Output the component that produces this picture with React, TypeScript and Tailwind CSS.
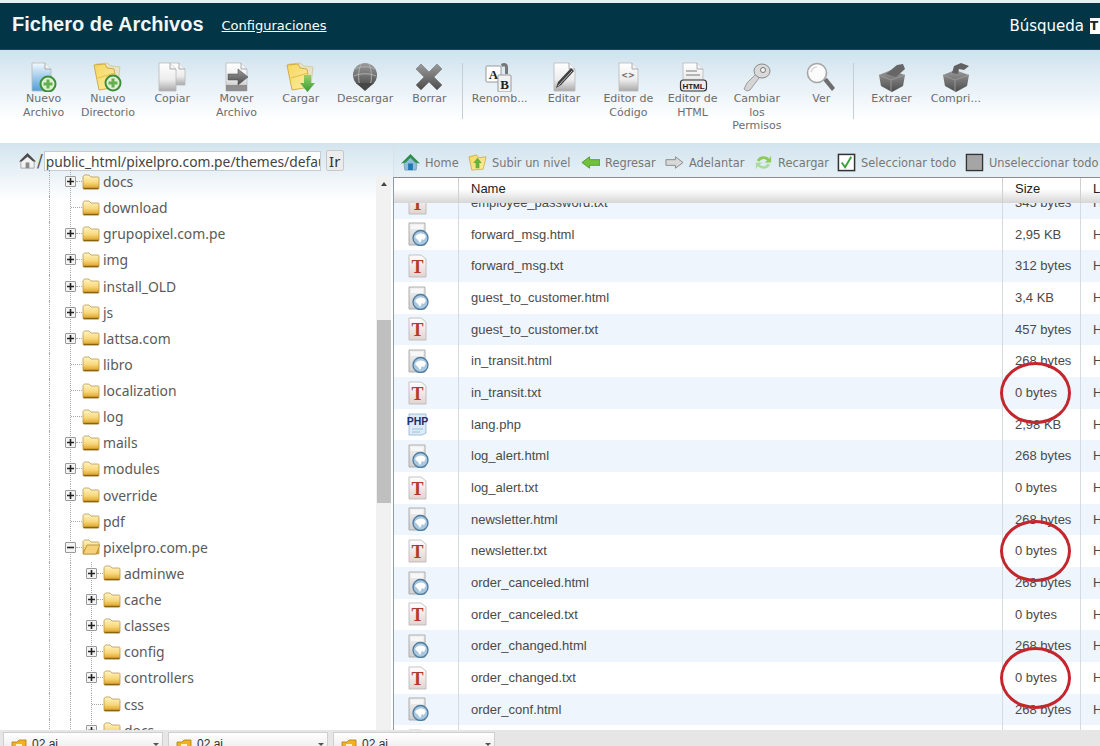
import React from "react";

const dejavu = "[font-family:'DejaVu_Sans',sans-serif]";
const noto = "[font-family:'Noto_Sans',sans-serif]";
const arial = "[font-family:'Liberation_Sans',Arial,sans-serif]";

const Defs = () => (
  <svg width={0} height={0} className="block h-0 w-0">
    <defs>
      <linearGradient id="folder" x1="0" y1="0" x2="0" y2="1">
        <stop offset="0" stopColor="#fff6c8" />
        <stop offset="0.55" stopColor="#f8d778" />
        <stop offset="1" stopColor="#d99a22" />
      </linearGradient>
      <linearGradient id="bigFolder" x1="0" y1="0" x2="1" y2="1">
        <stop offset="0" stopColor="#f7d65e" />
        <stop offset="1" stopColor="#fbeea6" />
      </linearGradient>
      <linearGradient id="page" x1="0" y1="0" x2="0" y2="1">
        <stop offset="0" stopColor="#ffffff" />
        <stop offset="0.6" stopColor="#ececec" />
        <stop offset="1" stopColor="#a9a9a9" />
      </linearGradient>
      <linearGradient id="bluePage" x1="0" y1="0" x2="0" y2="1">
        <stop offset="0" stopColor="#f4f9fd" />
        <stop offset="1" stopColor="#4f9ddb" />
      </linearGradient>
      <linearGradient id="metal" x1="0" y1="0" x2="0" y2="1">
        <stop offset="0" stopColor="#9a9a9a" />
        <stop offset="1" stopColor="#4c4c4c" />
      </linearGradient>
      <linearGradient id="green" x1="0" y1="0" x2="0" y2="1">
        <stop offset="0" stopColor="#8fd36a" />
        <stop offset="1" stopColor="#3c9a32" />
      </linearGradient>
      <linearGradient id="txtPage" x1="0" y1="0" x2="0" y2="1">
        <stop offset="0" stopColor="#ffffff" />
        <stop offset="1" stopColor="#e2d3d0" />
      </linearGradient>
      <linearGradient id="htmlPage" x1="0" y1="0" x2="0" y2="1">
        <stop offset="0" stopColor="#f2f2f2" />
        <stop offset="1" stopColor="#cfcfcf" />
      </linearGradient>
    </defs>
  </svg>
);

const Plus = ({ cx, cy }: { cx: number; cy: number }) => (
  <g>
    <circle cx={cx} cy={cy} r="7.5" fill="#dff0d5" stroke="#3d8f3a" strokeWidth="2" />
    <path d={`M${cx - 4.5} ${cy}H${cx + 4.5}M${cx} ${cy - 4.5}V${cy + 4.5}`} stroke="#62b04f" strokeWidth="3" />
  </g>
);

const Page = ({ x = 6, w = 20, h = 28, fill = "url(#page)" }: { x?: number; w?: number; h?: number; fill?: string }) => (
  <g>
    <path d={`M${x} 1H${x + w - 6}L${x + w} 7V${h}H${x}Z`} fill={fill} stroke="#b9b9b9" strokeWidth="0.8" />
    <path d={`M${x + w - 6} 1V7H${x + w}`} fill="#f4f4f4" stroke="#9b9b9b" strokeWidth="0.8" />
  </g>
);

const BigFolder = () => (
  <g>
    <path d="M4 2L15 1L19 4L28 5L26 22H8Z" fill="#e8e3c8" stroke="#c9b874" strokeWidth="0.6" />
    <path d="M2 3L13 2L15 6L22 7L25 25L7 28Z" fill="url(#bigFolder)" stroke="#c79f2c" strokeWidth="0.8" />
    <path d="M6 16L23 11" stroke="#e3bf4a" strokeWidth="1.2" />
  </g>
);

const toolbarIcons: Record<string, React.ReactNode> = {
  newFile: (
    <>
      <Page x={4} w={19} h={29} fill="url(#bluePage)" />
      <Plus cx={20} cy={22} />
    </>
  ),
  newDir: (
    <>
      <BigFolder />
      <Plus cx={21} cy={21} />
    </>
  ),
  copy: (
    <>
      <Page x={14} w={15} h={23} />
      <Page x={3} w={17} h={29} />
    </>
  ),
  move: (
    <>
      <Page x={5} w={21} h={29} />
      <path d="M5 23H26V29H5Z" fill="#8f8f8f" />
      <path d="M7 12H17V7L27 15L17 23V18H7Z" fill="url(#metal)" stroke="#444" strokeWidth="0.5" />
    </>
  ),
  upload: (
    <>
      <BigFolder />
      <path d="M19 13H26V21H30L22.5 30L15 21H19Z" fill="url(#green)" />
    </>
  ),
  download: (
    <>
      <circle cx="16" cy="13" r="12" fill="url(#metal)" />
      <path d="M6 7C11 4 21 4 26 7M5 14C11 11 21 11 27 14M12 2C9 9 9 17 11 24M20 2C23 9 23 17 21 24" fill="none" stroke="#b5b5b5" strokeWidth="0.9" />
      <path d="M7 21H25L16 29Z" fill="#474747" />
    </>
  ),
  remove: (
    <path d="M3 7L8 2L16 10L24 2L29 7L21 15L29 23L24 28L16 20L8 28L3 23L11 15Z" fill="url(#metal)" stroke="#777" strokeWidth="0.6" />
  ),
  rename: (
    <>
      <path d="M17 2C20 0 24 1 24 5V12H21V5C21 4 19 4 18 5Z" fill="#777" />
      <rect x="2" y="4" width="15" height="16" rx="1" fill="#fff" stroke="#999" />
      <text x="9.5" y="17" textAnchor="middle" fontFamily="Liberation Serif" fontWeight="bold" fontSize="13" fill="#222">A</text>
      <rect x="14" y="13" width="13" height="17" rx="1" fill="#f2f2f2" stroke="#999" />
      <text x="20.5" y="27" textAnchor="middle" fontFamily="Liberation Serif" fontWeight="bold" fontSize="13" fill="#222">B</text>
    </>
  ),
  edit: (
    <>
      <Page x={6} w={21} h={29} />
      <path d="M8 26L10 20L23 6L26 9L13 23Z" fill="#3f3f3f" />
      <path d="M10 24L24 9" stroke="#cfcfcf" strokeWidth="0.9" />
    </>
  ),
  code: (
    <>
      <Page x={7} w={19} h={29} />
      <text x="16" y="16" textAnchor="middle" fontFamily="DejaVu Sans" fontWeight="bold" fontSize="8" fill="#666">{"<>"}</text>
    </>
  ),
  html: (
    <>
      <Page x={6} w={20} h={26} />
      <path d="M9 9H20M9 13H23" stroke="#777" strokeWidth="1" />
      <rect x="3.5" y="18" width="26" height="11" rx="3" fill="#ececec" stroke="#333" strokeWidth="1.2" />
      <text x="16.5" y="26.5" textAnchor="middle" fontFamily="Liberation Sans" fontWeight="bold" fontSize="8" fill="#222">HTML</text>
    </>
  ),
  key: (
    <>
      <path d="M3 27L6 21L15 12L18 16L9 28L6 29Z" fill="#d5d5d5" stroke="#8a8a8a" strokeWidth="0.8" />
      <ellipse cx="21" cy="9" rx="8" ry="7" fill="#d9d9d9" stroke="#8a8a8a" />
      <circle cx="22" cy="8" r="2.5" fill="#f5f5f5" stroke="#777" />
    </>
  ),
  view: (
    <>
      <path d="M18 18L22 16L30 26L27 29Z" fill="#6d6d6d" />
      <circle cx="12" cy="11" r="9.5" fill="#fbfbfb" stroke="#a6a6a6" strokeWidth="1.6" />
      <path d="M6 10C7 7 9 5 12 5" fill="none" stroke="#cfcfcf" strokeWidth="1.2" />
    </>
  ),
  extract: (
    <>
      <path d="M3 13L15 8L29 13L27 24L16 30L5 24Z" fill="url(#metal)" />
      <path d="M10 12L21 3L27 2L29 7L20 15Z" fill="#666" />
      <path d="M15 18V30M3 13L15 18L29 13" fill="none" stroke="#9a9a9a" strokeWidth="0.9" />
    </>
  ),
  compress: (
    <>
      <path d="M3 13L15 8L29 13L27 24L16 30L5 24Z" fill="url(#metal)" />
      <path d="M12 11L14 4L21 1L29 4L24 8L19 7L18 12Z" fill="#616161" />
      <path d="M15 18V30M3 13L15 18L29 13" fill="none" stroke="#9a9a9a" strokeWidth="0.9" />
    </>
  ),
};

const firstTools = [
  { icon: "newFile", lines: ["Nuevo", "Archivo"] },
  { icon: "newDir", lines: ["Nuevo", "Directorio"] },
  { icon: "copy", lines: ["Copiar"] },
  { icon: "move", lines: ["Mover", "Archivo"] },
  { icon: "upload", lines: ["Cargar"] },
  { icon: "download", lines: ["Descargar"] },
  { icon: "remove", lines: ["Borrar"] },
];
const secondTools = [
  { icon: "rename", lines: ["Renomb..."] },
  { icon: "edit", lines: ["Editar"] },
  { icon: "code", lines: ["Editor de", "Código"] },
  { icon: "html", lines: ["Editor de", "HTML"] },
  { icon: "key", lines: ["Cambiar", "los", "Permisos"] },
  { icon: "view", lines: ["Ver"] },
];
const thirdTools = [
  { icon: "extract", lines: ["Extraer"] },
  { icon: "compress", lines: ["Compri..."] },
];

const ToolItem = ({ icon, lines }: { icon: string; lines: string[] }) => (
  <div className="flex w-[64.3px] shrink-0 flex-col items-center">
    <svg viewBox="0 0 32 30" className="h-[30px] w-[32px]">
      {toolbarIcons[icon]}
    </svg>
    {lines.map((line) => (
      <span key={line} className="whitespace-nowrap text-center text-[11px] leading-[13.5px] text-[#6d6d6d]">
        {line}
      </span>
    ))}
  </div>
);

const ToolSep = () => <div className="mr-[5px] mt-[1px] h-[56px] w-px shrink-0 bg-[#c4ced4]" />;

const navItems = [
  {
    label: "Home",
    w: "w-[67px]",
    icon: (
      <>
        <path d="M3 10L10 3L17 10L16 18H4Z" fill="#8fbcd8" stroke="#5d8aa6" strokeWidth="0.6" />
        <path d="M0 11L10 1L20 11L15 10L10 5L5 10Z" fill="#2f8f4a" />
        <rect x="7.5" y="11" width="5" height="7" fill="#1f76b0" />
      </>
    ),
  },
  {
    label: "Subir un nivel",
    w: "w-[113px]",
    icon: (
      <>
        <path d="M1 4L9 2L11 5L19 4L16 17L4 18Z" fill="url(#bigFolder)" stroke="#c79f2c" strokeWidth="0.7" />
        <path d="M10 5L14.5 10.5H12V16H8V10.5H5.5Z" fill="#65b33a" />
      </>
    ),
  },
  {
    label: "Regresar",
    w: "w-[84px]",
    icon: <path d="M1 10L9 4V7H20V13H9V16Z" fill="#72c13a" stroke="#3f8b28" strokeWidth="0.8" />,
  },
  {
    label: "Adelantar",
    w: "w-[89px]",
    icon: <path d="M19 10L11 4V7H1V13H11V16Z" fill="#d8d8d8" stroke="#808080" strokeWidth="0.9" />,
  },
  {
    label: "Recargar",
    w: "w-[83px]",
    icon: (
      <>
        <path d="M3 8C5 3 12 2 16 6L18 3V10H11L14 8C11 5 7 6 6 9Z" fill="#8ccb55" />
        <path d="M17 12C15 17 8 18 4 14L2 17V10H9L6 12C9 15 13 14 14 11Z" fill="#a9dca0" />
      </>
    ),
  },
  {
    label: "Seleccionar todo",
    w: "w-[128px]",
    icon: (
      <>
        <rect x="1.5" y="1.5" width="17" height="17" fill="#fff" stroke="#333" strokeWidth="1.6" />
        <path d="M5 10L8.5 15L15 4" fill="none" stroke="#3aa03a" strokeWidth="2" />
      </>
    ),
  },
  {
    label: "Unseleccionar todo",
    w: "w-[134px]",
    icon: <rect x="1.5" y="1.5" width="17" height="17" fill="#a5a5a5" stroke="#333" strokeWidth="1.4" />,
  },
];

const treeRows: { name: string; level: 0 | 1; mark: "plus" | "minus" | "none"; open?: boolean }[] = [
  { name: "docs", level: 0, mark: "plus" },
  { name: "download", level: 0, mark: "none" },
  { name: "grupopixel.com.pe", level: 0, mark: "plus" },
  { name: "img", level: 0, mark: "plus" },
  { name: "install_OLD", level: 0, mark: "plus" },
  { name: "js", level: 0, mark: "plus" },
  { name: "lattsa.com", level: 0, mark: "plus" },
  { name: "libro", level: 0, mark: "none" },
  { name: "localization", level: 0, mark: "none" },
  { name: "log", level: 0, mark: "none" },
  { name: "mails", level: 0, mark: "plus" },
  { name: "modules", level: 0, mark: "plus" },
  { name: "override", level: 0, mark: "plus" },
  { name: "pdf", level: 0, mark: "none" },
  { name: "pixelpro.com.pe", level: 0, mark: "minus", open: true },
  { name: "adminwe", level: 1, mark: "plus" },
  { name: "cache", level: 1, mark: "plus" },
  { name: "classes", level: 1, mark: "plus" },
  { name: "config", level: 1, mark: "plus" },
  { name: "controllers", level: 1, mark: "plus" },
  { name: "css", level: 1, mark: "none" },
  { name: "docs", level: 1, mark: "plus" },
];

const guide = "h-full shrink-0 border-l border-dotted border-[#a8a8a8]";

const Folder = ({ open }: { open?: boolean }) => (
  <svg viewBox="0 0 18 16" className="h-[16px] w-[18px] shrink-0">
    <path d="M1 3C1 2 2 1 3 1H7L9 3H16C17 3 17 4 17 5V14C17 15 16 15 15 15H3C2 15 1 15 1 14Z" fill="url(#folder)" stroke="#b08a3e" strokeWidth="0.7" />
    {open ? (
      <path d="M1 15L5 6H18L14 15Z" fill="#f5d27a" stroke="#a97f2e" strokeWidth="0.7" />
    ) : (
      <path d="M1.5 14.5H16.5" stroke="#8a6413" strokeWidth="1.4" />
    )}
  </svg>
);

const TreeRow = ({ name, level, mark, open }: (typeof treeRows)[number]) => (
  <div className="flex h-[26.13px] shrink-0 items-center">
    <span className="h-full w-[49px] shrink-0" />
    {level === 1 ? (
      <>
        <span className={`${guide} w-[21px]`} />
        <span className={`${guide} w-[16px]`} />
      </>
    ) : (
      <span className={`${guide} w-[16px]`} />
    )}
    <span className="flex h-full w-[11px] shrink-0 items-center justify-center bg-[repeating-linear-gradient(to_bottom,#a8a8a8_0,#a8a8a8_1px,transparent_1px,transparent_2px)] bg-[length:1px_100%] bg-center bg-no-repeat">
      {mark !== "none" && (
        <span className="-mt-[3px] flex h-[11px] w-[11px] shrink-0 items-center justify-center rounded-[1px] border border-[#999] bg-[#f4f4f4]">
          <svg viewBox="0 0 7 7" className="h-[7px] w-[7px]">
            <path d={mark === "plus" ? "M0 3.5H7M3.5 0V7" : "M0 3.5H7"} stroke="#222" strokeWidth="1.6" />
          </svg>
        </span>
      )}
    </span>
    <span className={`-mt-[3px] h-0 shrink-0 border-t border-dotted border-[#a8a8a8] ${mark === "none" ? "-ml-[5px] w-[11px]" : "w-[6px]"}`} />
    <span className="-mt-[3px] flex items-center">
      <Folder open={open} />
    </span>
    <span className={`-mt-[2px] ml-[3px] whitespace-nowrap text-[13.9px] leading-none text-[#5a5a5a] ${noto}`}>{name}</span>
  </div>
);

type FileKind = "html" | "txt" | "php";
const files: { name: string; size: string; kind: FileKind; circled?: boolean }[] = [
  { name: "forward_msg.html", size: "2,95 KB", kind: "html" },
  { name: "forward_msg.txt", size: "312 bytes", kind: "txt" },
  { name: "guest_to_customer.html", size: "3,4 KB", kind: "html" },
  { name: "guest_to_customer.txt", size: "457 bytes", kind: "txt" },
  { name: "in_transit.html", size: "268 bytes", kind: "html" },
  { name: "in_transit.txt", size: "0 bytes", kind: "txt", circled: true },
  { name: "lang.php", size: "2,98 KB", kind: "php" },
  { name: "log_alert.html", size: "268 bytes", kind: "html" },
  { name: "log_alert.txt", size: "0 bytes", kind: "txt" },
  { name: "newsletter.html", size: "268 bytes", kind: "html" },
  { name: "newsletter.txt", size: "0 bytes", kind: "txt", circled: true },
  { name: "order_canceled.html", size: "268 bytes", kind: "html" },
  { name: "order_canceled.txt", size: "0 bytes", kind: "txt" },
  { name: "order_changed.html", size: "268 bytes", kind: "html" },
  { name: "order_changed.txt", size: "0 bytes", kind: "txt", circled: true },
  { name: "order_conf.html", size: "268 bytes", kind: "html" },
  { name: "order_confirmed.txt", size: "0 bytes", kind: "txt" },
];

const FileIcon = ({ kind }: { kind: FileKind }) => {
  if (kind === "php") {
    return (
      <svg viewBox="0 0 24 24" className="h-[24px] w-[24px]">
        <path d="M3 2H20V21L16 23H3Z" fill="#dcebf7" stroke="#8fb2cf" strokeWidth="0.8" />
        <text x="11.5" y="13" textAnchor="middle" fontFamily="Liberation Sans" fontWeight="bold" fontSize="10.5" fill="#1c2f66">PHP</text>
        <path d="M6 17H17M6 20H14" stroke="#9cc0dc" strokeWidth="1" />
      </svg>
    );
  }
  if (kind === "txt") {
    return (
      <svg viewBox="0 0 24 24" className="h-[24px] w-[24px]">
        <path d="M3 1H15L20 5V23H3Z" fill="url(#txtPage)" stroke="#b5b5b5" strokeWidth="0.8" />
        <text x="11.5" y="19" textAnchor="middle" fontFamily="Liberation Serif" fontWeight="bold" fontSize="18" fill="#b23a28">T</text>
      </svg>
    );
  }
  return (
    <svg viewBox="0 0 24 24" className="h-[24px] w-[24px]">
      <path d="M3 1H19V23H3Z" fill="url(#htmlPage)" stroke="#a5a5a5" strokeWidth="0.9" />
      <path d="M5 3H17V7H5Z" fill="#f7f7f7" />
      <circle cx="14.5" cy="16" r="7.5" fill="#a9c8e0" stroke="#4f7c9f" strokeWidth="1.3" />
      <path d="M9 15C11 11 17 10 20 14L18 18L16 17L14 21L12 18Z" fill="#ffffff" />
    </svg>
  );
};

const FileRow = ({ name, size, kind, circled, striped }: (typeof files)[number] & { striped: boolean }) => (
  <div className={`flex h-[31.67px] shrink-0 items-center text-[13px] text-[#4a4a4a] ${arial} ${striped ? "bg-[#eef5fc]" : "bg-white"}`}>
    <div className="flex h-full w-[65px] shrink-0 items-center border-r border-[#d5dadf] pl-[12px]">
      <FileIcon kind={kind} />
    </div>
    <div className="flex h-full w-[544px] shrink-0 items-center border-r border-[#d5dadf] pl-[12px]">{name}</div>
    <div className="relative flex h-full w-[78px] shrink-0 items-center border-r border-[#d5dadf] pl-[12px]">
      {size}
      {circled && (
        <span className="absolute left-[-3px] top-[-15px] z-10 h-[62px] w-[71px] rounded-[50%] border-[3px] border-[#c4262e]" />
      )}
    </div>
    <div className="flex h-full flex-1 items-center pl-[12px]">H</div>
  </div>
);

const BottomTab = ({ width }: { width: string }) => (
  <div className={`flex h-[14px] items-start gap-[5px] overflow-hidden border border-b-0 border-[#cfcfcf] bg-[linear-gradient(to_bottom,#ffffff,#f0f0f0)] pl-[7px] ${width}`}>
    <svg viewBox="0 0 16 14" className="mt-[6px] h-[14px] w-[16px] shrink-0">
      <path d="M1 3H6L8 1H15V13H1Z" fill="#f2b21c" stroke="#b17c10" strokeWidth="0.8" />
      <rect x="5" y="5" width="6" height="5" fill="#fff2c4" />
    </svg>
    <span className={`mt-[4px] grow whitespace-nowrap text-[12px] leading-[14px] text-[#333] ${arial}`}>02.ai</span>
    <span className="mr-[3px] mt-[10px] h-0 w-0 border-x-[3px] border-t-[3px] border-x-transparent border-t-[#555]" />
  </div>
);

export default function App() {
  return (
    <div className={`flex h-[746px] w-[1100px] flex-col overflow-hidden bg-white ${dejavu}`}>
      <Defs />
      <div className="h-[3px] shrink-0 bg-[#e9eef0]" />

      <header className="flex h-[47px] shrink-0 items-center border-b border-[#0f4a5a] bg-[#023545] pl-[12px]">
        <h1 className={`mb-[4px] text-[20px] font-bold leading-none text-[#f3f6f7] ${arial}`}>Fichero de Archivos</h1>
        <a className="ml-[18px] text-[13px] text-white underline">Configuraciones</a>
        <div className="ml-auto flex items-center gap-[6px]">
          <span className="text-[15px] text-white">Búsqueda</span>
          <span className="h-[16px] w-[10px] overflow-hidden bg-white text-[12px] font-bold leading-[16px] text-[#222]">T</span>
        </div>
      </header>

      <div className="flex h-[93px] shrink-0 items-start bg-[linear-gradient(to_bottom,#cfe2ee,#ffffff_75%)] pl-[11.5px] pt-[12px]">
        {firstTools.map((t) => (
          <ToolItem key={t.icon} {...t} />
        ))}
        <ToolSep />
        {secondTools.map((t) => (
          <ToolItem key={t.icon} {...t} />
        ))}
        <ToolSep />
        {thirdTools.map((t) => (
          <ToolItem key={t.icon} {...t} />
        ))}
      </div>

      <div className="flex min-h-0 flex-1">
        <aside className="flex w-[393px] shrink-0 flex-col bg-[linear-gradient(to_bottom,#d3e4ee,#ffffff_58px)]">
          <div className="flex h-[27px] shrink-0 items-start pl-[19px] pt-[8px]">
            <svg viewBox="0 0 18 18" className="mt-[2px] h-[17px] w-[17px] shrink-0">
              <path d="M2 9L9 2L16 9V16H2Z" fill="#f2f2f2" stroke="#888" strokeWidth="0.7" />
              <path d="M0 9L9 0L18 9L15 9L9 4L3 9Z" fill="#4d4d4d" />
              <rect x="7" y="10" width="4" height="6" fill="#8a8a8a" />
            </svg>
            <span className="ml-[1px] text-[17px] leading-[20px] text-[#555]">/</span>
            <input
              readOnly
              value="public_html/pixelpro.com.pe/themes/default"
              className={`ml-[1px] h-[20px] w-[277px] shrink-0 border border-[#c5cdd2] bg-white pl-[1px] text-[13.8px] leading-[18px] text-[#444] outline-none ${noto}`}
            />
            <button className={`ml-[5px] h-[21px] w-[18px] shrink-0 -translate-y-px rounded-[2px] border border-[#c8c8c8] bg-[#ececec] text-[15px] leading-[18px] text-[#333] ${noto}`}>
              Ir
            </button>
          </div>
          <div className="flex min-h-0 flex-1">
            <div className="min-w-0 flex-1 overflow-hidden">
              {treeRows.map((row, i) => (
                <TreeRow key={i} {...row} />
              ))}
            </div>
            <div className="mr-[2px] mt-[6px] flex w-[15px] shrink-0 flex-col items-center bg-[#f1f1f1]">
              <span className="mt-[6px] h-0 w-0 border-x-[3.5px] border-b-[4px] border-x-transparent border-b-[#444]" />
              <span className="mt-[134px] h-[183px] w-[14px] bg-[#bfbfbf]" />
            </div>
          </div>
        </aside>

        <main className="flex min-w-0 flex-1 flex-col">
          <nav className="flex h-[34px] shrink-0 items-center border-l border-[#d7e2e9] bg-[linear-gradient(to_bottom,#d3e4ee,#e6f0f6)] pl-[7px] pt-[6px]">
            {navItems.map((item) => (
              <div key={item.label} className={`flex shrink-0 items-center gap-[5px] ${item.w}`}>
                <svg viewBox="0 0 20 20" className="h-[19px] w-[19px] shrink-0">
                  {item.icon}
                </svg>
                <span className="mt-[2px] whitespace-nowrap text-[11.4px] text-[#777]">{item.label}</span>
              </div>
            ))}
          </nav>
          <div className="flex min-h-0 flex-1 flex-col overflow-hidden border-l border-[#8d9ca8]">
            <div className={`relative z-20 flex h-[26px] shrink-0 border-t border-[#8c8c8c] bg-[linear-gradient(to_bottom,#ffffff,#ffffff_45%,#d6d6d6)] text-[13px] text-[#222] ${arial}`}>
              <div className="h-full w-[65px] shrink-0 border-r border-[#d0d0d0]" />
              <div className="flex h-full w-[544px] shrink-0 items-center border-r border-[#d0d0d0] pb-[4px] pl-[12px]">Name</div>
              <div className="flex h-full w-[78px] shrink-0 items-center border-r border-[#d0d0d0] pb-[4px] pl-[12px]">Size</div>
              <div className="flex h-full flex-1 items-center pb-[4px] pl-[12px]">L</div>
            </div>
            <div className="min-h-0 flex-1 overflow-hidden">
              <div className="-mt-[16px]">
                <FileRow name="employee_password.txt" size="345 bytes" kind="txt" striped />
                {files.map((f, i) => (
                  <FileRow key={f.name} {...f} striped={i % 2 === 1} />
                ))}
              </div>
            </div>
          </div>
        </main>
      </div>

      <footer className="flex h-[16px] shrink-0 items-end gap-[5px] overflow-hidden bg-[#e6e6e6] pl-[3px]">
        <BottomTab width="w-[160px]" />
        <BottomTab width="w-[160px]" />
        <BottomTab width="w-[162px]" />
      </footer>
    </div>
  );
}
